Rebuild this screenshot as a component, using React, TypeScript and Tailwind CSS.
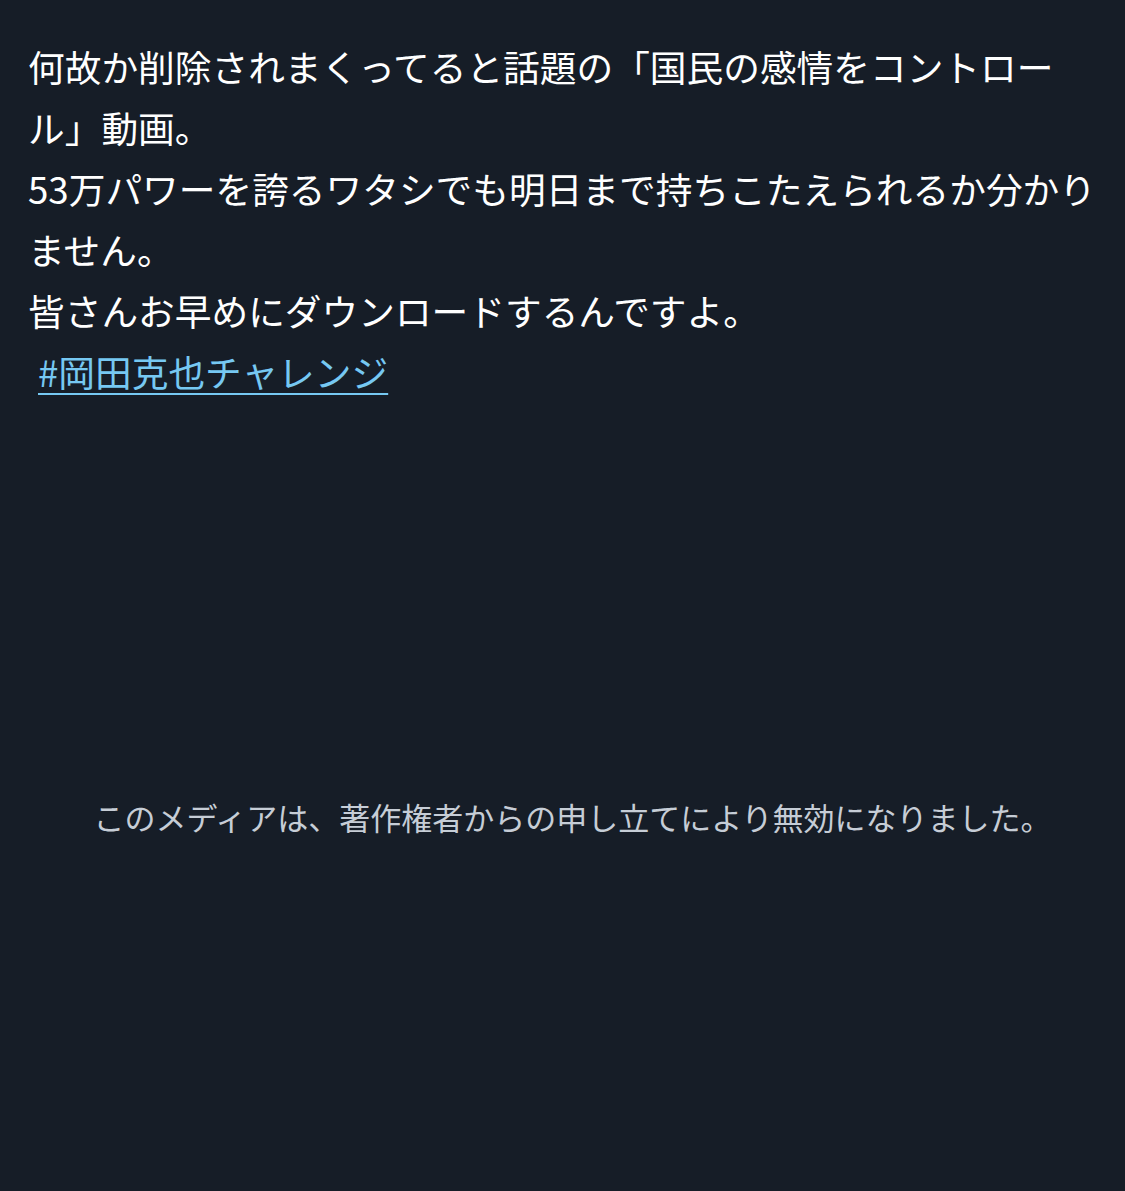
import React from "react";

const jp = "font-['Noto_Sans_CJK_JP','Noto_Sans',sans-serif]";

export default function App() {
  return (
    <main className={`min-h-[1191px] w-[1125px] bg-[#161d27] ${jp} flex flex-col`}>
      <div className="pt-[36px] pl-[28px] pr-[24px] text-[36.7px] leading-[61px] text-white">
        <p>何故か削除されまくってると話題の「国民の感情をコントロール」動画。</p>
        <p>53万パワーを誇るワタシでも明日まで持ちこたえられるか分かりません。</p>
        <p>皆さんお早めにダウンロードするんですよ。</p>
        <p>
          <a className="ml-[10px] text-[#76c8f2] underline decoration-2 underline-offset-[6px]">#岡田克也チャレンジ</a>
        </p>
      </div>
      <div className="flex h-[435px] items-end justify-center pl-[20px]">
        <p className="text-[31px] leading-[40px] text-[#c6cdd6]">
          このメディアは、著作権者からの申し立てにより無効になりました。
        </p>
      </div>
    </main>
  );
}
